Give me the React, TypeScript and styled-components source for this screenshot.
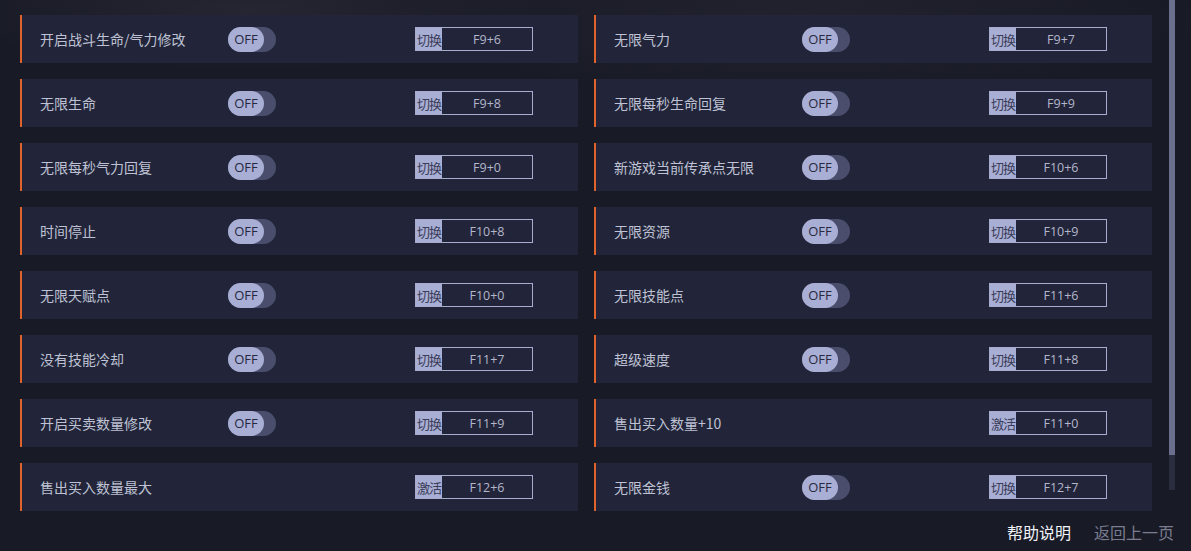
import React from "react";
import styled, { createGlobalStyle } from "styled-components";

const Global = createGlobalStyle`
  html, body { margin: 0; padding: 0; background: #181a26; }
  body { font-family: "Noto Sans CJK SC", "Noto Sans", sans-serif; }
`;

const Page = styled.div`
  position: relative;
  width: 1191px;
  height: 551px;
  overflow: hidden;
  background:
    radial-gradient(ellipse 300px 60px at 250px 10px, rgba(60,60,70,0.35), transparent),
    radial-gradient(ellipse 400px 80px at 800px 20px, rgba(60,60,70,0.25), transparent),
    #181a26;
  display: flex;
  flex-direction: column;
`;

const Body = styled.div`
  display: flex;
  padding: 15px 0 0 20px;
`;

const Grid = styled.div`
  display: grid;
  grid-template-columns: 558px 558px;
  column-gap: 16px;
  row-gap: 16px;
`;

const Card = styled.div`
  height: 48px;
  box-sizing: border-box;
  background: #222539;
  border-left: 2px solid #e0622c;
  display: grid;
  grid-template-columns: 188px 187px 118px;
  align-items: center;
  padding-left: 18px;
`;

const Label = styled.span`
  color: #bfc2d4;
  font-size: 14px;
  white-space: nowrap;
`;

const Toggle = styled.div`
  width: 48px;
  height: 25px;
  border-radius: 13px;
  background: #4a4e6c;
  display: flex;
  align-items: center;
`;

const Knob = styled.div`
  width: 36px;
  height: 25px;
  border-radius: 13px;
  background: #a9aed5;
  color: #262940;
  font-family: "Open Sans", "Noto Sans", sans-serif;
  font-size: 13px;
  display: flex;
  align-items: center;
  justify-content: center;
`;

const KeyBox = styled.div`
  width: 118px;
  height: 24px;
  box-sizing: border-box;
  border: 1px solid #a7abcc;
  display: flex;
  align-items: stretch;
`;

const KeyTag = styled.span`
  width: 26px;
  background: #a9aed5;
  color: #3a3d58;
  font-size: 13px;
  display: flex;
  align-items: center;
  justify-content: center;
  letter-spacing: -1px;
`;

const KeyValue = styled.span`
  flex: 1;
  color: #b3b6cb;
  font-family: "Open Sans", "Noto Sans", sans-serif;
  font-size: 12.5px;
  display: flex;
  align-items: center;
  justify-content: center;
`;

const Scroll = styled.div`
  position: absolute;
  left: 1169px;
  top: 0;
  width: 6px;
  height: 490px;
  background: #2a2d3e;
`;

const Thumb = styled.div`
  width: 6px;
  height: 455px;
  background: #6a6f8e;
`;

const Footer = styled.div`
  position: absolute;
  right: 17px;
  bottom: 9px;
  display: flex;
  gap: 23px;
  font-size: 16px;
  line-height: 20px;
`;

const FootLink = styled.span<{ $active?: boolean }>`
  color: ${(p) => (p.$active ? "#f2f3f8" : "#7a7d90")};
`;

type Item = { label: string; toggle: boolean; tag: string; key: string };

const items: Item[] = [
  { label: "开启战斗生命/气力修改", toggle: true, tag: "切换", key: "F9+6" },
  { label: "无限气力", toggle: true, tag: "切换", key: "F9+7" },
  { label: "无限生命", toggle: true, tag: "切换", key: "F9+8" },
  { label: "无限每秒生命回复", toggle: true, tag: "切换", key: "F9+9" },
  { label: "无限每秒气力回复", toggle: true, tag: "切换", key: "F9+0" },
  { label: "新游戏当前传承点无限", toggle: true, tag: "切换", key: "F10+6" },
  { label: "时间停止", toggle: true, tag: "切换", key: "F10+8" },
  { label: "无限资源", toggle: true, tag: "切换", key: "F10+9" },
  { label: "无限天赋点", toggle: true, tag: "切换", key: "F10+0" },
  { label: "无限技能点", toggle: true, tag: "切换", key: "F11+6" },
  { label: "没有技能冷却", toggle: true, tag: "切换", key: "F11+7" },
  { label: "超级速度", toggle: true, tag: "切换", key: "F11+8" },
  { label: "开启买卖数量修改", toggle: true, tag: "切换", key: "F11+9" },
  { label: "售出买入数量+10", toggle: false, tag: "激活", key: "F11+0" },
  { label: "售出买入数量最大", toggle: false, tag: "激活", key: "F12+6" },
  { label: "无限金钱", toggle: true, tag: "切换", key: "F12+7" },
];

export default function App() {
  return (
    <>
      <Global />
      <Page>
        <Body>
          <Grid>
            {items.map((it) => (
              <Card key={it.key}>
                <Label>{it.label}</Label>
                <div>
                  {it.toggle && (
                    <Toggle>
                      <Knob>OFF</Knob>
                    </Toggle>
                  )}
                </div>
                <KeyBox>
                  <KeyTag>{it.tag}</KeyTag>
                  <KeyValue>{it.key}</KeyValue>
                </KeyBox>
              </Card>
            ))}
          </Grid>
        </Body>
        <Scroll>
          <Thumb />
        </Scroll>
        <Footer>
          <FootLink $active>帮助说明</FootLink>
          <FootLink>返回上一页</FootLink>
        </Footer>
      </Page>
    </>
  );
}
